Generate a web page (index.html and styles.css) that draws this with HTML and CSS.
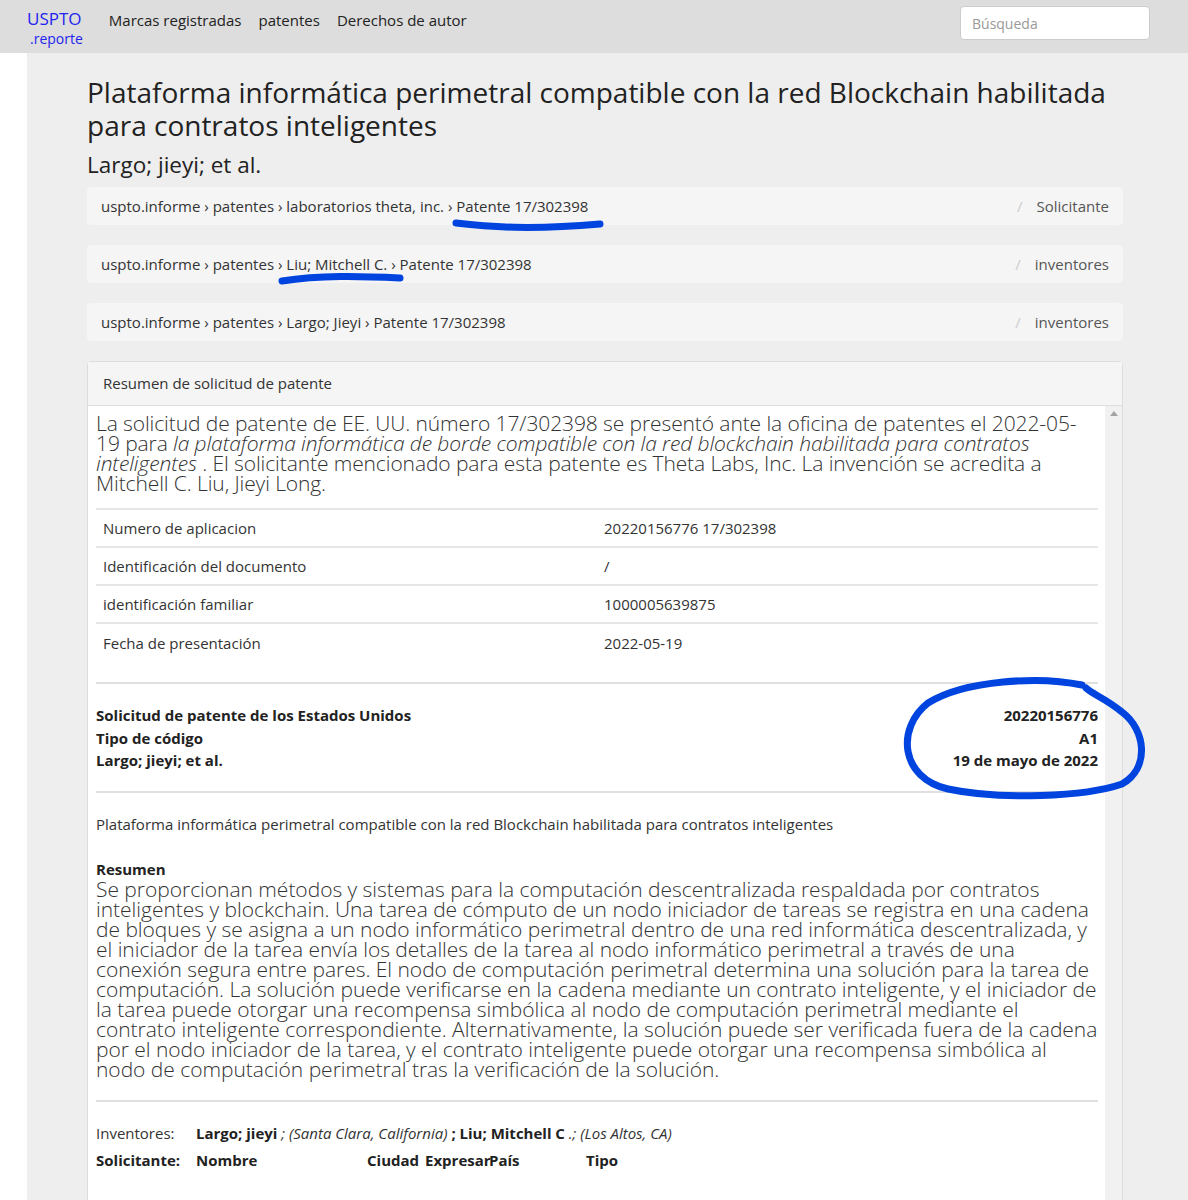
FILE: index.html
```html
<!DOCTYPE html>
<html lang="es">
<head>
<meta charset="utf-8">
<title>USPTO .reporte</title>
<link rel="stylesheet" href="styles.css">
</head>
<body>
<nav class="topbar">
  <a class="brand" href="#"><span class="brand-main">USPTO</span><span class="brand-sub">.reporte</span></a>
  <ul class="navlinks">
    <li><a href="#">Marcas registradas</a></li>
    <li><a href="#">patentes</a></li>
    <li><a href="#">Derechos de autor</a></li>
  </ul>
  <input class="search" type="text" placeholder="Búsqueda">
</nav>

<main class="page">
  <h1 class="title">Plataforma informática perimetral compatible con la red Blockchain habilitada para contratos inteligentes</h1>
  <h2 class="authors">Largo; jieyi; et al.</h2>

  <div class="crumb"><span class="trail">uspto.informe › patentes › laboratorios theta, inc. › Patente 17/302398</span><span class="role"><span class="slash">/</span>Solicitante</span></div>
  <div class="crumb"><span class="trail">uspto.informe › patentes › Liu; Mitchell C. › Patente 17/302398</span><span class="role"><span class="slash">/</span>inventores</span></div>
  <div class="crumb"><span class="trail">uspto.informe › patentes › Largo; Jieyi › Patente 17/302398</span><span class="role"><span class="slash">/</span>inventores</span></div>

  <section class="panel">
    <div class="panel-head">Resumen de solicitud de patente</div>
    <div class="panel-body">
      <div class="panel-content">
        <p class="lead">La solicitud de patente de EE. UU. número 17/302398 se presentó ante la oficina de patentes el 2022-05-<wbr>19 para <em>la plataforma informática de borde compatible con la red blockchain habilitada para contratos inteligentes</em> . El solicitante mencionado para esta patente es Theta Labs, Inc. La invención se acredita a Mitchell C. Liu, Jieyi Long.</p>
        <table class="facts">
          <tr><td>Numero de aplicacion</td><td>20220156776 17/302398</td></tr>
          <tr><td>Identificación del documento</td><td>/</td></tr>
          <tr><td>identificación familiar</td><td>1000005639875</td></tr>
          <tr><td>Fecha de presentación</td><td>2022-05-19</td></tr>
        </table>
        <hr class="rule rule-top">
        <div class="pubinfo">
          <div class="pub-left">
            <div>Solicitud de patente de los Estados Unidos</div>
            <div>Tipo de código</div>
            <div>Largo; jieyi; et al.</div>
          </div>
          <div class="pub-right">
            <div>20220156776</div>
            <div>A1</div>
            <div>19 de mayo de 2022</div>
          </div>
        </div>
        <hr class="rule">
        <p class="subtitle">Plataforma informática perimetral compatible con la red Blockchain habilitada para contratos inteligentes</p>
        <div class="abstract-label">Resumen</div>
        <p class="abstract">Se proporcionan métodos y sistemas para la computación descentralizada respaldada por contratos inteligentes y blockchain. Una tarea de cómputo de un nodo iniciador de tareas se registra en una cadena de bloques y se asigna a un nodo informático perimetral dentro de una red informática descentralizada, y el iniciador de la tarea envía los detalles de la tarea al nodo informático perimetral a través de una conexión segura entre pares. El nodo de computación perimetral determina una solución para la tarea de computación. La solución puede verificarse en la cadena mediante un contrato inteligente, y el iniciador de la tarea puede otorgar una recompensa simbólica al nodo de computación perimetral mediante el contrato inteligente correspondiente. Alternativamente, la solución puede ser verificada fuera de la cadena por el nodo iniciador de la tarea, y el contrato inteligente puede otorgar una recompensa simbólica al nodo de computación perimetral tras la verificación de la solución.</p>
        <hr class="rule rule-abs">
        <div class="people">
          <div class="people-row"><span class="people-label">Inventores:</span><span class="people-val"><b>Largo; jieyi</b> <i>; (Santa Clara, California)</i> <b>; Liu; Mitchell C</b> <i>.; (Los Altos, CA)</i></span></div>
          <div class="people-row"><b class="people-label">Solicitante:</b><span class="applicant-cols"><b class="c-name">Nombre</b><b class="c-city">Ciudad</b><b class="c-state">Expresar</b><b class="c-country">País</b><b class="c-type">Tipo</b></span></div>
        </div>
      </div>
      <div class="scrollbar"><span class="arrow"></span></div>
    </div>
  </section>
</main>

<svg class="marks" width="1188" height="1200" viewBox="0 0 1188 1200" xmlns="http://www.w3.org/2000/svg">
  <path d="M456,223 C490,227 530,230 600,224" />
  <path d="M282,281 C320,275 360,276 400,278" />
  <path d="M1082,685 C1040,676 965,680 928,703 C896,728 900,778 948,789 C1000,800 1085,797 1122,784 C1150,768 1146,730 1122,712 C1105,698 1092,694 1086,688" />
</svg>
</body>
</html>
```

FILE: styles.css
```css
* { box-sizing: border-box; }
html, body { margin: 0; padding: 0; background: #fff; }
body {
  font-family: "Open Sans", "Liberation Sans", sans-serif;
  color: #222;
  position: relative;
  width: 1188px;
  height: 1200px;
  overflow: hidden;
}
a { color: inherit; text-decoration: none; }

.topbar {
  display: flex;
  align-items: flex-start;
  height: 53px;
  background: #dddddd;
  padding-left: 27px;
}
.brand { display: flex; flex-direction: column; padding-top: 8px; line-height: 1; }
.brand-main { font-size: 17px; color: #2323ee; line-height: 22px; }
.brand-sub { font-size: 14px; color: #2323ee; line-height: 16px; padding-left: 3px; margin-top: 1px; }
.navlinks {
  list-style: none;
  display: flex;
  gap: 17px;
  margin: 0 0 0 26px;
  padding: 10px 0 0;
  font-size: 15px;
  line-height: 20px;
  color: #222;
}
.search {
  margin-left: auto;
  margin-right: 38px;
  margin-top: 6px;
  width: 190px;
  height: 34px;
  border: 1px solid #ccc;
  border-radius: 4px;
  padding: 0 11px;
  font-family: "Open Sans", sans-serif;
  font-size: 14px;
  background: #fff;
}
.search::placeholder { color: #999; }

.page {
  margin-left: 27px;
  background: #eeeeee;
  padding: 23px 65px 0 60px;
  height: 1147px;
}
.title {
  margin: 0;
  font-weight: 400;
  font-size: 28px;
  line-height: 33px;
  color: #222;
}
.authors {
  margin: 8px 0 7px;
  font-weight: 400;
  font-size: 22.5px;
  line-height: 30px;
  color: #222;
}

.crumb {
  display: flex;
  justify-content: space-between;
  align-items: center;
  height: 38px;
  margin-bottom: 20px;
  padding: 0 14px;
  background: #f5f5f5;
  border-radius: 4px;
  font-size: 15px;
  color: #333;
}
.role { color: #555; }
.slash { color: #ccc; padding-right: 14px; }

.panel {
  background: #fff;
  border: 1px solid #ddd;
  border-radius: 4px 4px 0 0;
  margin-top: 1px;
}
.panel-head {
  height: 44px;
  background: #f5f5f5;
  border-bottom: 1px solid #ddd;
  padding: 11px 15px 0;
  font-size: 15px;
  color: #333;
}
.panel-body { display: flex; }
.panel-content { flex: 1; padding: 7px 7px 100px 8px; }
.scrollbar {
  width: 17px;
  background: #f1f1f1;
  position: relative;
  flex: none;
}
.arrow {
  position: absolute;
  top: 5px;
  left: 5px;
  width: 0; height: 0;
  border-left: 4px solid transparent;
  border-right: 4px solid transparent;
  border-bottom: 5px solid #a3a3a3;
}

.lead {
  margin: 0 0 15px;
  font-size: 21px;
  line-height: 20px;
  font-weight: 300;
  color: #333;
  letter-spacing: -0.1px;
}
.facts {
  width: 100%;
  border-collapse: collapse;
  font-size: 15px;
  color: #333;
}
.facts td {
  border-top: 2px solid #e6e6e6;
  height: 38px;
  padding: 0 7px;
}
.facts td:first-child { width: 501px; }

.rule {
  border: 0;
  border-top: 2px solid #e0e0e0;
  margin: 0;
}
.rule-top { margin-top: 21px; }
.pubinfo {
  display: flex;
  justify-content: space-between;
  padding: 20px 0 19px;
  font-weight: 700;
  font-size: 15px;
  line-height: 22.5px;
  color: #222;
}
.pub-right { text-align: right; }
.subtitle {
  margin: 21px 0 26px;
  font-size: 15px;
  color: #333;
  line-height: 20px;
}
.abstract-label {
  font-weight: 700;
  font-size: 15px;
  line-height: 18px;
  color: #222;
}
.abstract {
  margin: 1px 0 21px;
  font-size: 21px;
  line-height: 20px;
  font-weight: 300;
  color: #333;
  letter-spacing: -0.03px;
}
.rule-abs { margin-top: 0; }
.people {
  padding-top: 18px;
  font-size: 15px;
  color: #222;
}
.people-row { display: flex; line-height: 27px; }
.people-label { width: 100px; flex: none; }
.people-row:first-child .people-label { color: #333; }
.people-val i { font-size: 15px; color: #333; }
.applicant-cols { display: flex; }
.c-name { width: 171px; }
.c-city { width: 58px; }
.c-state { width: 64px; }
.c-country { width: 97px; }

.marks {
  position: absolute;
  top: 0;
  left: 0;
  pointer-events: none;
}
.marks path {
  fill: none;
  stroke: #0044e0;
  stroke-width: 7;
  stroke-linecap: round;
  stroke-linejoin: round;
}
```
